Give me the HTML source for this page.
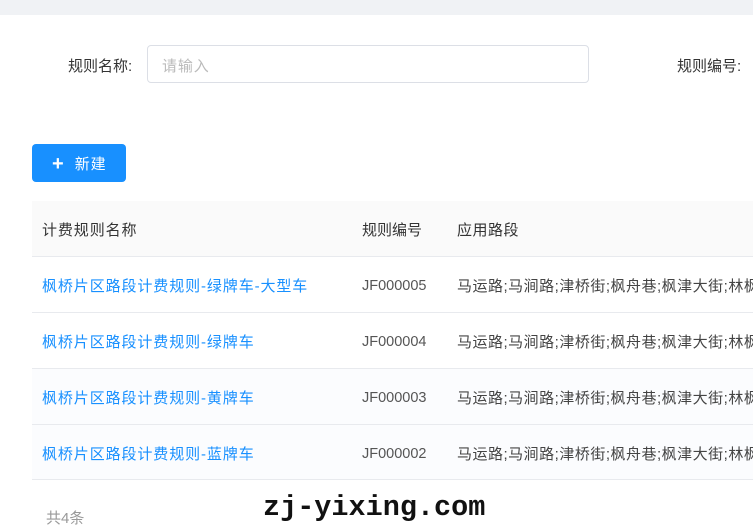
<!DOCTYPE html>
<html><head><meta charset="utf-8"><style>
*{margin:0;padding:0;box-sizing:border-box}
body{width:753px;height:532px;overflow:hidden;background:#fff;font-family:"Liberation Sans","Noto Sans CJK SC",sans-serif;font-size:15px;color:#333;position:relative;letter-spacing:0.9px}
.top{position:absolute;left:0;top:0;width:753px;height:15px;background:#f0f2f5}
.abs{position:absolute;white-space:nowrap}
.inp{position:absolute;left:147px;top:45px;width:442px;height:38px;border:1px solid #dcdfe6;border-radius:4px;color:#bbb;padding:9px 0 0 14px}
.btn{position:absolute;left:32px;top:144px;width:94px;height:38px;background:#1890ff;border-radius:4px;color:#fff;font-size:15px;padding:8px 0 0 20px}
.row{position:absolute;left:32px;width:721px;height:56px;border-bottom:1px solid #e8eaee;overflow:hidden}
.row span{position:absolute;top:18px;white-space:nowrap}
.a{left:10px;color:#1890ff}
.b{left:330px;color:#555;font-size:14.5px;letter-spacing:0;top:21px!important}
.c{left:425px;color:#444;letter-spacing:0.5px}
</style></head><body>
<div class="top"></div>
<div class="abs" style="left:68px;top:55px;letter-spacing:0">规则名称:</div>
<div class="inp">请输入</div>
<div class="abs" style="left:677px;top:55px;letter-spacing:0">规则编号:</div>
<div class="btn"><b style="font-size:20px;position:relative;top:1px">+</b>&nbsp; 新建</div>
<div class="row" style="top:201px;background:#fafafa"><span class="a" style="color:#333">计费规则名称</span><span class="b" style="color:#333;top:18px!important;font-size:15px">规则编号</span><span class="c" style="color:#333">应用路段</span></div>
<div class="row" style="top:257px"><span class="a">枫桥片区路段计费规则-绿牌车-大型车</span><span class="b">JF000005</span><span class="c">马运路;马涧路;津桥街;枫舟巷;枫津大街;林枫</span></div>
<div class="row" style="top:313px"><span class="a">枫桥片区路段计费规则-绿牌车</span><span class="b">JF000004</span><span class="c">马运路;马涧路;津桥街;枫舟巷;枫津大街;林枫</span></div>
<div class="row" style="top:369px;background:#fbfcfe"><span class="a">枫桥片区路段计费规则-黄牌车</span><span class="b">JF000003</span><span class="c">马运路;马涧路;津桥街;枫舟巷;枫津大街;林枫</span></div>
<div class="row" style="top:425px;height:55px;background:#fbfcfe"><span class="a">枫桥片区路段计费规则-蓝牌车</span><span class="b">JF000002</span><span class="c">马运路;马涧路;津桥街;枫舟巷;枫津大街;林枫</span></div>
<div class="abs" style="left:46px;top:507px;color:#999;letter-spacing:0">共4条</div>
<div class="abs" style="left:263px;top:492px;font-family:'Liberation Mono',monospace;font-weight:bold;font-size:28.5px;line-height:32px;color:#111;letter-spacing:0">zj-yixing.com</div>
</body></html>
